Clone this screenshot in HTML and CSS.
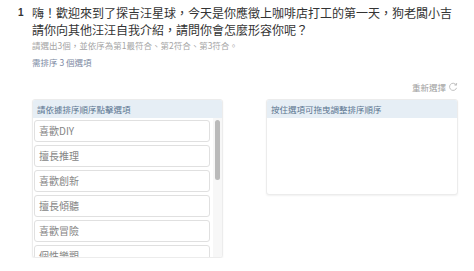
FILE: index.html
```html
<!DOCTYPE html>
<html lang="zh-Hant">
<head>
  <meta charset="UTF-8">
  <meta name="viewport" content="width=device-width, initial-scale=1.0">
  <title>排序題</title>
  <link rel="stylesheet" href="styles.css">
</head>
<body>
  <div class="question">
    <div class="q-num">1</div>
    <div class="q-body">
      <h2 class="q-title">嗨！歡迎來到了探吉汪星球，今天是你應徵上咖啡店打工的第一天，狗老闆小吉請你向其他汪汪自我介紹，請問你會怎麼形容你呢？</h2>
      <p class="q-hint">請選出3個，並依序為第1最符合、第2符合、第3符合。</p>
      <p class="q-count">需排序 3 個選項</p>

      <div class="reset-row">
        <span class="reset">重新選擇
          <svg class="reset-icon" viewBox="0 0 12 12" width="10" height="10">
            <path d="M9.6 3.2 A4.3 4.3 0 1 0 10.3 7" fill="none" stroke="#b5b5b5" stroke-width="1"/>
            <path d="M10.4 1.2 L10.1 3.9 L7.5 3.4" fill="none" stroke="#b5b5b5" stroke-width="1"/>
          </svg>
        </span>
      </div>

      <div class="sort-area">
        <div class="panel panel-options">
          <div class="panel-head">請依據排序順序點擊選項</div>
          <div class="option-wrap">
            <div class="option-list">
              <div class="option">喜歡DIY</div>
              <div class="option">擅長推理</div>
              <div class="option">喜歡創新</div>
              <div class="option">擅長傾聽</div>
              <div class="option">喜歡冒險</div>
              <div class="option">個性樂觀</div>
            </div>
            <div class="scroll-track">
              <div class="scroll-thumb"></div>
            </div>
          </div>
        </div>

        <div class="panel panel-sorted">
          <div class="panel-head">按住選項可拖曳調整排序順序</div>
          <div class="sorted-list"></div>
        </div>
      </div>
    </div>
  </div>
</body>
</html>
```

FILE: styles.css
```css
body {
  font-family: "Noto Sans CJK TC", "Liberation Sans", sans-serif;
  background-color: #fff;
  color: #333;
  margin: 0;
  padding: 0;
}

.question {
  display: flex;
  padding: 4px 16px 0 18px;
}

.q-num {
  width: 14px;
  font-family: "Liberation Sans", sans-serif;
  font-size: 10px;
  font-weight: bold;
  line-height: 17px;
  color: #333;
}

.q-body {
  width: 426px;
}

.q-title {
  margin: 0;
  font-size: 12px;
  font-weight: normal;
  line-height: 17px;
  color: #333;
}

.q-hint {
  margin: 1px 0 0;
  font-size: 8.5px;
  line-height: 12px;
  color: #a5a5a5;
}

.q-count {
  margin: 5px 0 0;
  font-size: 8.5px;
  line-height: 12px;
  color: #7d8aa3;
}

.reset-row {
  display: flex;
  justify-content: flex-end;
  margin-top: 13px;
  height: 12px;
}

.reset {
  display: flex;
  align-items: center;
  gap: 2px;
  font-size: 8.5px;
  line-height: 12px;
  color: #a0a0a0;
}

.sort-area {
  display: grid;
  grid-template-columns: 191px 192px;
  justify-content: space-between;
  align-items: start;
  margin-top: 6px;
}

.panel {
  border: 1px solid #ececec;
  border-radius: 3px;
  box-shadow: 0 1px 2px rgba(0, 0, 0, 0.06);
  background-color: #fff;
  overflow: hidden;
}

.panel-head {
  background-color: #e6eef5;
  height: 18px;
  padding-left: 4px;
  font-size: 8.5px;
  line-height: 18px;
  color: #5b7590;
}

.option-wrap {
  display: flex;
  height: 139px;
}

.option-list {
  flex: 1;
  overflow: hidden;
  padding: 2px 3px 0 1px;
}

.option {
  height: 22px;
  margin-bottom: 3px;
  padding-left: 4px;
  border: 1px solid #e0e0e0;
  border-radius: 3px;
  box-sizing: border-box;
  font-size: 10px;
  line-height: 20px;
  color: #858585;
}

.scroll-track {
  width: 9px;
  background-color: #f7f7f7;
  padding: 2px 2px 0;
  box-sizing: border-box;
}

.scroll-thumb {
  height: 60px;
  background-color: #bababa;
  border-radius: 3px;
}

.sorted-list {
  height: 76px;
}
```
